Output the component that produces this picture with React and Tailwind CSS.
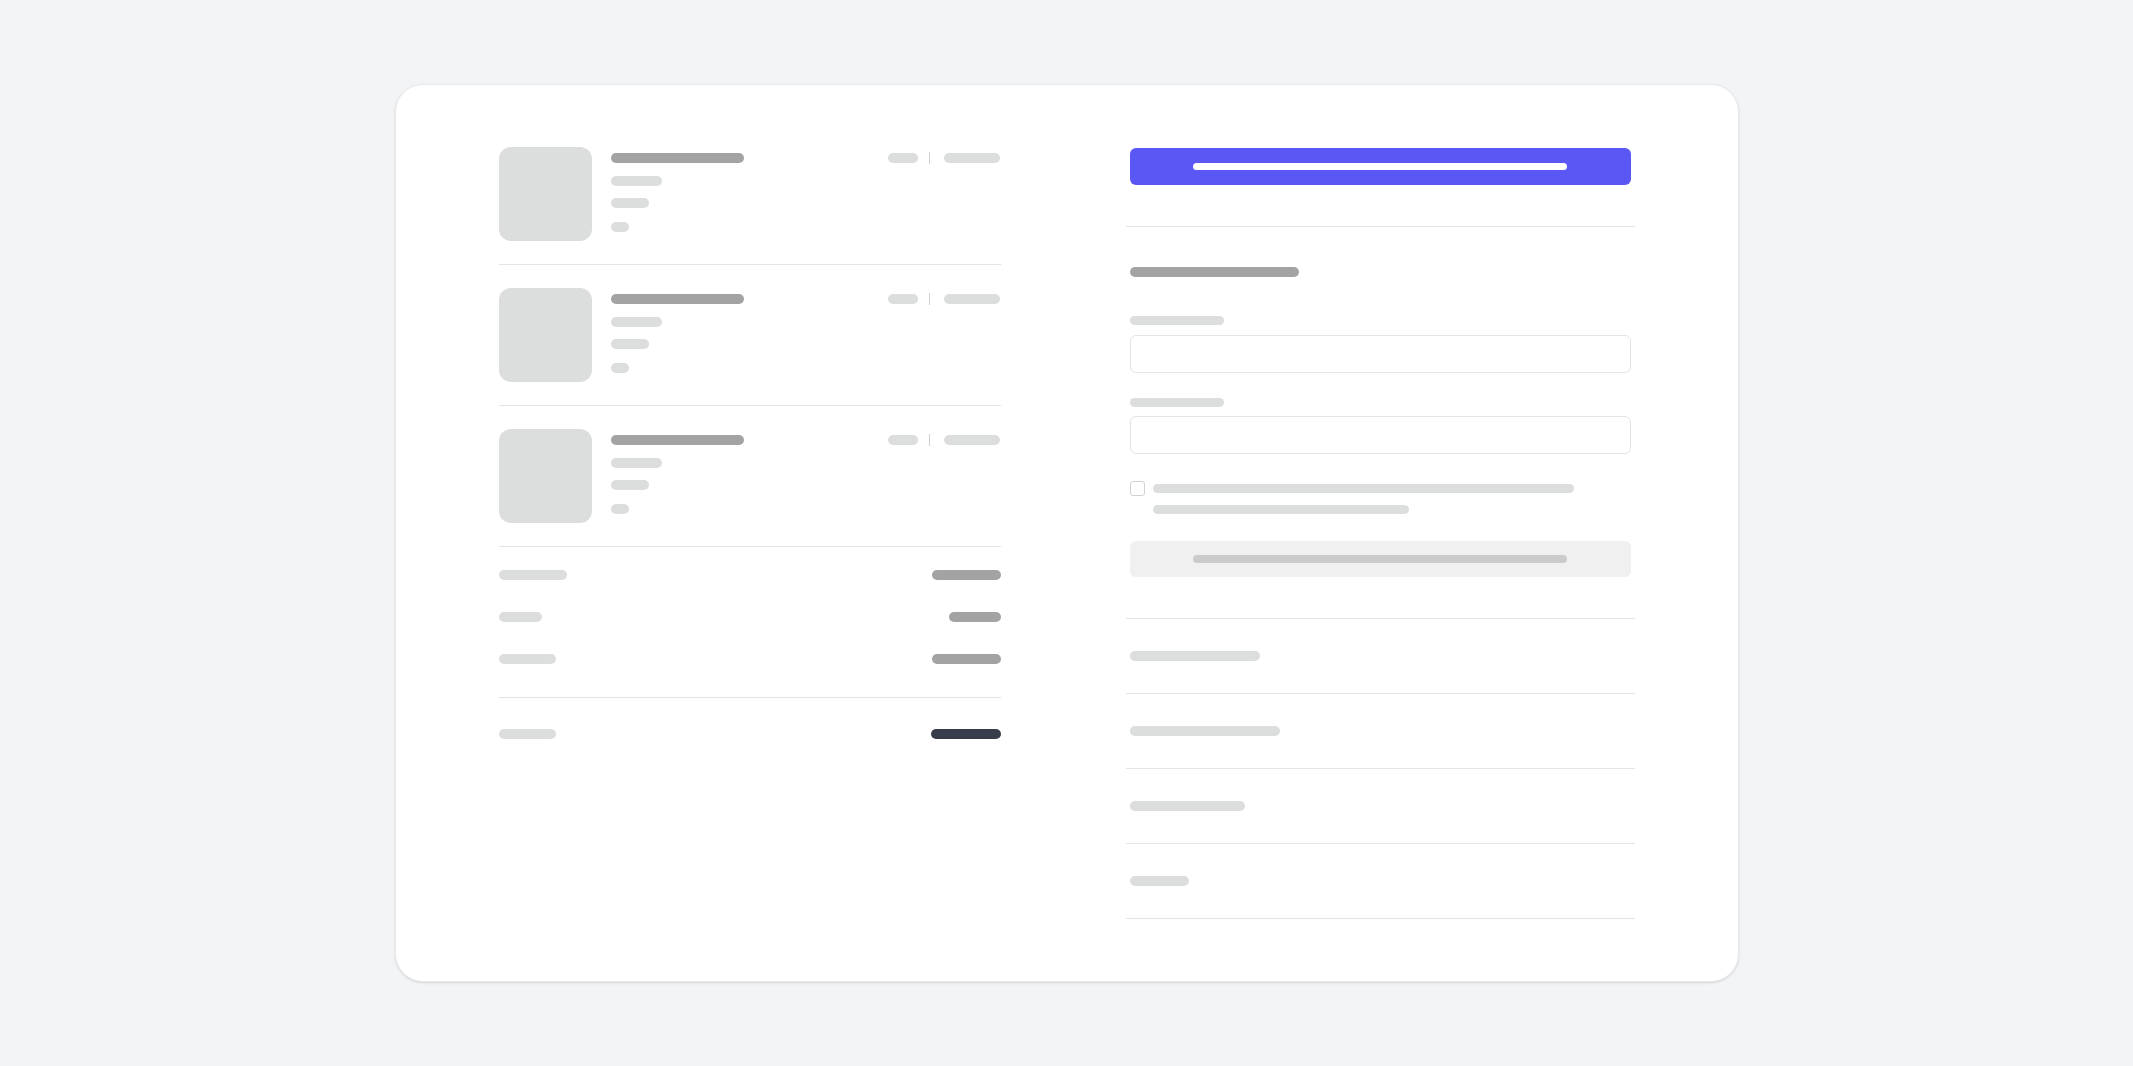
import React from "react";

const light = "bg-[#dcdddd]";
const dark = "bg-[#a3a3a3]";

const Bar = ({ className = "" }) => <div className={`rounded-full ${className}`} />;

const CartItem = () => (
  <div className="flex gap-[19px] py-[23px] border-b border-[#e3e4e6] first:pt-0">
    <div className="w-[93px] h-[94px] rounded-xl bg-[#dcdedd] shrink-0" />
    <div className="flex-1 flex justify-between">
      <div className="flex flex-col pt-[6px]">
        <Bar className={`h-2.5 w-[133px] ${dark}`} />
        <Bar className={`mt-[13px] h-2.5 w-[51px] ${light}`} />
        <Bar className={`mt-3 h-2.5 w-[38px] ${light}`} />
        <Bar className={`mt-[14px] h-2.5 w-[18px] ${light}`} />
      </div>
      <div className="flex items-center self-start mt-[5px] h-3 pr-px">
        <Bar className={`h-2.5 w-[30px] ${light}`} />
        <div className="ml-[11px] h-3 w-px bg-[#cfd0d1]" />
        <Bar className={`ml-[14px] h-2.5 w-[56px] ${light}`} />
      </div>
    </div>
  </div>
);

const SummaryRow = ({ left, right, rightColor = dark }) => (
  <div className="flex justify-between items-center">
    <Bar className={`h-2.5 ${left} ${light}`} />
    <Bar className={`h-2.5 ${right} ${rightColor}`} />
  </div>
);

const AccordionRow = ({ width }) => (
  <div className="h-[75px] flex items-center px-1 border-b border-[#e3e4e6]">
    <Bar className={`h-2.5 ${width} ${light}`} />
  </div>
);

export default function App() {
  return (
    <div className="min-h-screen bg-[#f3f4f6] pt-[84px]">
      <div className="mx-auto w-[1344px] h-[898px] bg-white rounded-[28px] border border-[#e8e9eb] shadow-sm flex px-[103px] pt-[62px]">
        {/* left: cart */}
        <div className="w-[503px] flex flex-col">
          <CartItem />
          <CartItem />
          <CartItem />
          <div className="pt-[23px] pb-[33px] border-b border-[#e3e4e6] flex flex-col gap-8">
            <SummaryRow left="w-[68px]" right="w-[69px]" />
            <SummaryRow left="w-[43px]" right="w-[52px]" />
            <SummaryRow left="w-[57px]" right="w-[69px]" />
          </div>
          <div className="pt-[31px]">
            <SummaryRow left="w-[57px]" right="w-[70px]" rightColor="bg-[#373d4a]" />
          </div>
        </div>

        {/* right: checkout */}
        <div className="ml-[125px] w-[509px] flex flex-col pt-px">
          <div className="mx-1 h-[37px] rounded-md bg-[#5b57f5] flex items-center justify-center">
            <Bar className="h-[7px] w-[374px] bg-white" />
          </div>
          <div className="mt-[41px] border-t border-[#e3e4e6]" />
          <div className="px-1 pt-10 flex flex-col">
            <Bar className={`h-2.5 w-[169px] ${dark}`} />
            <Bar className={`mt-[39px] h-[9px] w-[94px] ${light}`} />
            <div className="mt-[10px] h-[38px] rounded-md border border-[#e3e4e6]" />
            <Bar className={`mt-[25px] h-[9px] w-[94px] ${light}`} />
            <div className="mt-[9px] h-[38px] rounded-md border border-[#e3e4e6]" />
            <div className="mt-[27px] flex gap-2">
              <div className="w-[15px] h-[15px] rounded-[3px] border border-[#cfd1d4] shrink-0" />
              <div className="pt-[3px] flex flex-col gap-3">
                <Bar className={`h-[9px] w-[421px] ${light}`} />
                <Bar className={`h-[9px] w-[256px] ${light}`} />
              </div>
            </div>
            <div className="mt-[27px] h-9 rounded-md bg-[#f0f0f0] flex items-center justify-center">
              <Bar className="h-2 w-[374px] bg-[#cbcbcb]" />
            </div>
          </div>
          <div className="mt-[41px] border-t border-[#e3e4e6]">
            <AccordionRow width="w-[130px]" />
            <AccordionRow width="w-[150px]" />
            <AccordionRow width="w-[115px]" />
            <AccordionRow width="w-[59px]" />
          </div>
        </div>
      </div>
    </div>
  );
}
